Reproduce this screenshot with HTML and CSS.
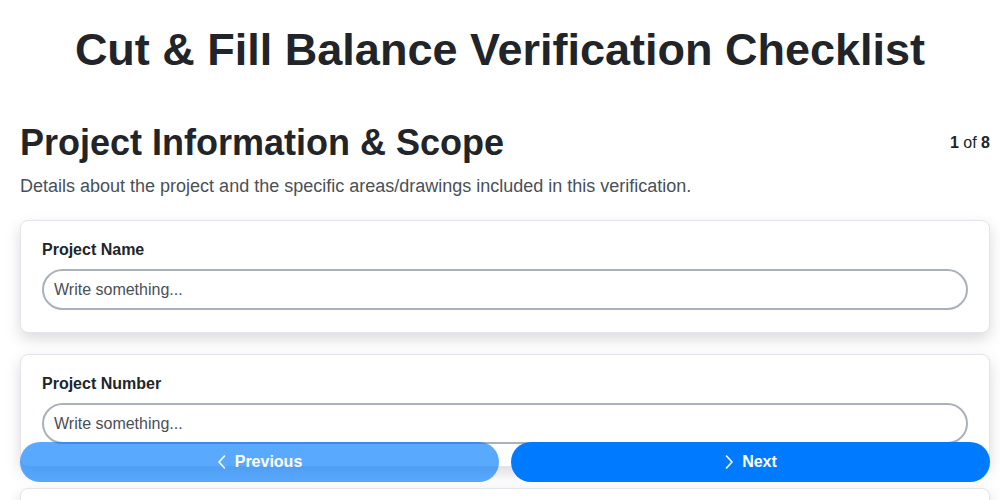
FILE: index.html
```html
<!DOCTYPE html>
<html lang="en">
<head>
<meta charset="utf-8">
<title>Cut &amp; Fill Balance Verification Checklist</title>
<link rel="stylesheet" href="styles.css">
</head>
<body>
<header class="header">
  <h1 class="title">Cut &amp; Fill Balance Verification Checklist</h1>
</header>
<main class="page">
  <section class="step">
    <div class="step-head">
      <h2 class="step-title">Project Information &amp; Scope</h2>
      <div class="step-count"><b>1</b> of <b>8</b></div>
    </div>
    <p class="step-desc">Details about the project and the specific areas/drawings included in this verification.</p>
    <div class="card">
      <label class="field-label">Project Name</label>
      <input class="field-input" type="text" placeholder="Write something...">
    </div>
    <div class="card">
      <label class="field-label">Project Number</label>
      <input class="field-input" type="text" placeholder="Write something...">
    </div>
    <div class="card">
      <label class="field-label">Project Location</label>
      <input class="field-input" type="text" placeholder="Write something...">
    </div>
  </section>
</main>
<nav class="nav">
  <button class="btn btn-prev" type="button">
    <svg class="chev" width="10" height="16" viewBox="0 0 10 16"><polyline points="7.5,2 2,8 7.5,14" fill="none" stroke="#fff" stroke-width="1.6" stroke-linecap="round" stroke-linejoin="round"/></svg>
    Previous
  </button>
  <button class="btn btn-next" type="button">
    <svg class="chev" width="10" height="16" viewBox="0 0 10 16"><polyline points="2.5,2 8,8 2.5,14" fill="none" stroke="#fff" stroke-width="1.6" stroke-linecap="round" stroke-linejoin="round"/></svg>
    Next
  </button>
</nav>
</body>
</html>
```
FILE: styles.css
```css
* { box-sizing: border-box; }
html, body { margin: 0; padding: 0; background: #fff; }
html, body { height: 500px; overflow: hidden; }
body {
  font-family: "Liberation Sans", Arial, sans-serif;
  color: #212529;
}
.header {
  padding-top: 25px;
}
.title {
  margin: 0;
  text-align: center;
  font-size: 45px;
  line-height: 50px;
  font-weight: 700;
}
.page {
  margin-left: 20px;
  width: 970px;
}
.step-head {
  display: flex;
  justify-content: space-between;
  align-items: center;
  margin-top: 46px;
}
.step-title {
  margin: 0;
  font-size: 36px;
  line-height: 43px;
  font-weight: 700;
}
.step-count {
  font-size: 16px;
  color: #212529;
  margin-top: 1px;
}
.step-desc {
  margin: 10px 0 22px;
  font-size: 18px;
  line-height: 24px;
  color: #495057;
}
.card {
  display: flex;
  flex-direction: column;
  gap: 10px;
  padding: 19px 21px 22px;
  margin-bottom: 21px;
  background: #fff;
  border: 1px solid #e4e5ec;
  border-radius: 8px;
  box-shadow: 0 6px 15px rgba(0, 0, 0, 0.15);
}
.field-label {
  font-size: 16px;
  line-height: 19px;
  font-weight: 700;
  color: #212529;
}
.field-input {
  height: 41px;
  width: 100%;
  padding: 0 10px;
  border: 2px solid #a9b1ba;
  border-radius: 21px;
  font-family: "Liberation Sans", Arial, sans-serif;
  font-size: 16px;
  color: #495057;
  background: #fff;
  outline: none;
}
.field-input::placeholder { color: #495057; opacity: 1; }
.nav {
  position: fixed;
  left: 20px;
  width: 970px;
  bottom: 18px;
  display: grid;
  grid-template-columns: 1fr 1fr;
  gap: 12px;
}
.btn {
  display: flex;
  align-items: center;
  justify-content: center;
  gap: 8px;
  height: 40px;
  border: none;
  border-radius: 20px;
  background: #007bff;
  color: #fff;
  font-family: "Liberation Sans", Arial, sans-serif;
  font-size: 16px;
  font-weight: 700;
}
.btn-prev { opacity: 0.65; }
.chev { display: block; }
```
